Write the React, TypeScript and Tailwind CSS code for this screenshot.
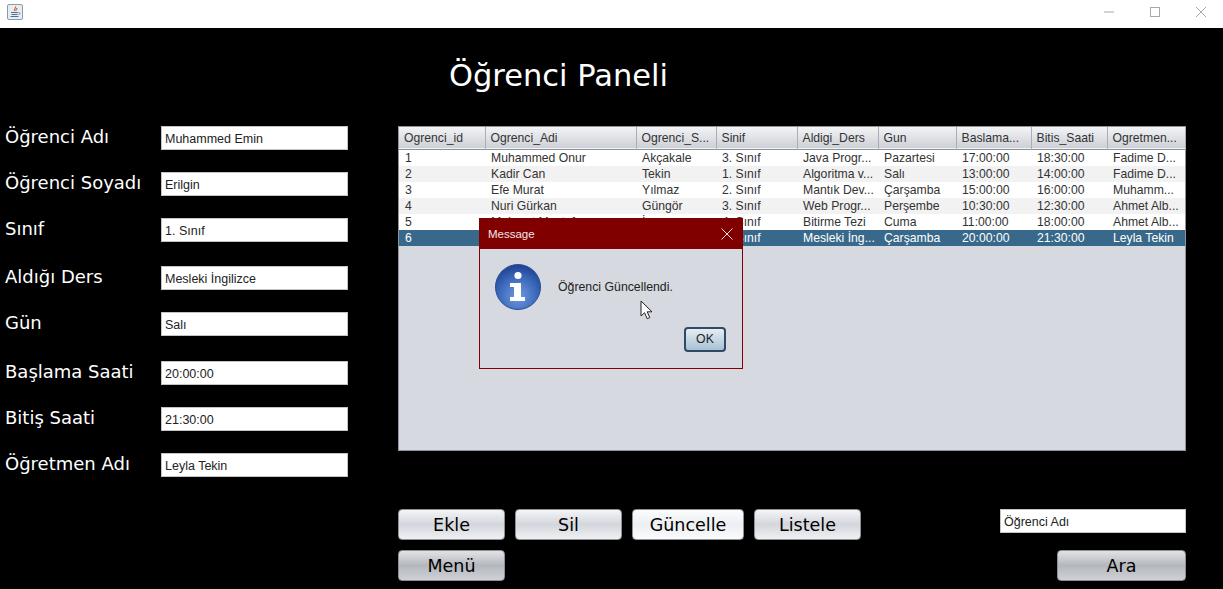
const formRows = [
  { label: "Öğrenci Adı", value: "Muhammed Emin", cls: "h-[46px]" },
  { label: "Öğrenci Soyadı", value: "Erilgin", cls: "h-[46px]" },
  { label: "Sınıf", value: "1. Sınıf", cls: "h-[48px]" },
  { label: "Aldığı Ders", value: "Mesleki İngilizce", cls: "h-[46px]" },
  { label: "Gün", value: "Salı", cls: "h-[49px]" },
  { label: "Başlama Saati", value: "20:00:00", cls: "h-[46px]" },
  { label: "Bitiş Saati", value: "21:30:00", cls: "h-[46px]" },
  { label: "Öğretmen Adı", value: "Leyla Tekin", cls: "h-[46px]" },
];

const columns = [
  { name: "Ogrenci_id", w: "w-[86px]" },
  { name: "Ogrenci_Adi", w: "w-[151px]" },
  { name: "Ogrenci_S...", w: "w-[80px]" },
  { name: "Sinif", w: "w-[81px]" },
  { name: "Aldigi_Ders", w: "w-[81px]" },
  { name: "Gun", w: "w-[78px]" },
  { name: "Baslama...", w: "w-[75px]" },
  { name: "Bitis_Saati", w: "w-[76px]" },
  { name: "Ogretmen...", w: "w-[78px]" },
];

const rows = [
  ["1", "Muhammed Onur", "Akçakale", "3. Sınıf", "Java Progr...", "Pazartesi", "17:00:00", "18:30:00", "Fadime D..."],
  ["2", "Kadir Can", "Tekin", "1. Sınıf", "Algoritma v...", "Salı", "13:00:00", "14:00:00", "Fadime D..."],
  ["3", "Efe Murat", "Yılmaz", "2. Sınıf", "Mantık Dev...", "Çarşamba", "15:00:00", "16:00:00", "Muhamm..."],
  ["4", "Nuri Gürkan", "Güngör", "3. Sınıf", "Web Progr...", "Perşembe", "10:30:00", "12:30:00", "Ahmet Alb..."],
  ["5", "Mehmet Mustafa", "İnan", "4. Sınıf", "Bitirme Tezi", "Cuma", "11:00:00", "18:00:00", "Ahmet Alb..."],
  ["6", "Muhammed Emin", "Erilgin", "1. Sınıf", "Mesleki İng...", "Çarşamba", "20:00:00", "21:30:00", "Leyla Tekin"],
];

function TextBox({ value, className }: { value: string; className: string }) {
  return (
    <div className={`h-[24px] bg-white border border-[#c4c4c4] px-[3px] text-[12.5px] leading-[24px] text-[#222] font-['Liberation_Sans',sans-serif] ${className}`}>
      {value}
    </div>
  );
}

function NimbusButton({ label, className }: { label: string; className: string }) {
  return (
    <button className={`rounded-[4px] border border-[#8c9099] pt-[2px] text-[17.5px] text-black font-['DejaVu_Sans',sans-serif] ${className}`}>
      {label}
    </button>
  );
}

const lightBtn = "h-[31px] bg-linear-to-b from-[#f4f5f7] via-[#d3d6dc] to-[#f0f1f3]";
const darkBtn = "h-[31px] bg-linear-to-b from-[#e2e3e6] via-[#b4b7bd] to-[#cfd1d5]";

function JavaIcon() {
  return (
    <svg width="16" height="16" viewBox="0 0 16 16">
      <rect x="0.5" y="0.5" width="15" height="15" rx="1.5" fill="#e8edf3" stroke="#8d9aa8" />
      <path d="M8.5 2.5C9.5 4 6.5 5 7.5 7M10 4C10 5 8.5 5.5 9 7" stroke="#d9622b" strokeWidth="1.1" fill="none" />
      <path d="M4 8.5h7M4.5 10.5h6M3.5 12.5h8" stroke="#4e6f94" strokeWidth="1" />
      <path d="M11.5 8.5c2 0 2 2 0 2" stroke="#4e6f94" strokeWidth="0.8" fill="none" />
    </svg>
  );
}

function InfoIcon() {
  return (
    <svg width="48" height="48" viewBox="0 0 48 48">
      <defs>
        <radialGradient id="infoFill" cx="50%" cy="70%" r="70%">
          <stop offset="0%" stopColor="#6f9be0" />
          <stop offset="60%" stopColor="#3c68bb" />
          <stop offset="100%" stopColor="#1d418f" />
        </radialGradient>
      </defs>
      <circle cx="24" cy="24" r="22.5" fill="url(#infoFill)" stroke="#2a4d94" />
      <circle cx="24" cy="12.5" r="3.6" fill="#fff" />
      <path d="M16 20h11v14h4v4H16v-4h4V24h-4z" fill="#fff" />
    </svg>
  );
}

function Cursor() {
  return (
    <svg width="14" height="20" viewBox="0 0 14 20" className="absolute left-[640px] top-[300px]">
      <path d="M1 1v15l3.6-3.3 2.6 6 2.6-1.1-2.6-5.8H12z" fill="#fff" stroke="#222" strokeWidth="1" />
    </svg>
  );
}

function WindowControls() {
  return (
    <div className="flex items-center gap-[34px] pr-[16px]">
      <svg width="12" height="12" viewBox="0 0 12 12"><path d="M1 6h10" stroke="#a8a8a8" /></svg>
      <svg width="12" height="12" viewBox="0 0 12 12"><rect x="1.5" y="1.5" width="9" height="9" fill="none" stroke="#a8a8a8" /></svg>
      <svg width="12" height="12" viewBox="0 0 12 12"><path d="M1 1l10 10M11 1L1 11" stroke="#a8a8a8" /></svg>
    </div>
  );
}

export default function App() {
  return (
    <div className="relative h-[589px] w-[1223px] overflow-hidden bg-black">
      <div className="flex h-[28px] items-center justify-between bg-white pl-[7px]">
        <div className="pb-[4px]"><JavaIcon /></div>
        <div className="pb-[4px]"><WindowControls /></div>
      </div>

      <div className="flex">
        <div className="w-[398px] pt-[98px] pl-[5px]">
          {formRows.map((r) => (
            <div key={r.label} className={`flex items-start ${r.cls}`}>
              <span className="mt-[1px] w-[156px] text-[18px] leading-[20px] text-white font-['DejaVu_Sans',sans-serif]">{r.label}</span>
              <TextBox value={r.value} className="w-[187px]" />
            </div>
          ))}
        </div>

        <div className="w-[788px]">
          <div className="h-[98px] pl-[51px] pt-[28px] text-[30.5px] leading-[40px] text-white font-['DejaVu_Sans',sans-serif]">
            Öğrenci Paneli
          </div>

          <div className="h-[325px] bg-[#d6d9df] border border-[#8f939c] font-['Liberation_Sans',sans-serif] text-[12.2px] text-[#333]">
            <table className="w-[786px] table-fixed border-collapse">
              <thead>
                <tr className="h-[22px] bg-linear-to-b from-[#f3f4f6] to-[#cdd0d6] border-b border-[#8c9099]">
                  {columns.map((c) => (
                    <th key={c.name} className={`${c.w} border-r border-[#a9adb5] pl-[5px] text-left font-normal whitespace-nowrap overflow-hidden`}>
                      {c.name}
                    </th>
                  ))}
                </tr>
              </thead>
              <tbody>
                {rows.map((row, i) => (
                  <tr key={row[0]} className={`h-[16px] leading-[16px] ${i === 5 ? "bg-[#39698a] text-white" : i % 2 === 0 ? "bg-white" : "bg-[#f2f2f2]"}`}>
                    {row.map((cell, j) => (
                      <td key={j} className="pl-[6px] p-0 whitespace-nowrap overflow-hidden">{cell}</td>
                    ))}
                  </tr>
                ))}
              </tbody>
            </table>
          </div>

          <div className="mt-[58px] flex justify-between">
            <div className="flex flex-col gap-[10px]">
              <div className="flex gap-[10px]">
                <NimbusButton label="Ekle" className={`w-[107px] ${lightBtn}`} />
                <NimbusButton label="Sil" className={`w-[107px] ${lightBtn}`} />
                <NimbusButton label="Güncelle" className="w-[112px] h-[31px] bg-linear-to-b from-[#fbfcfd] via-[#eceef1] to-[#fafbfc]" />
                <NimbusButton label="Listele" className={`w-[107px] ${lightBtn}`} />
              </div>
              <NimbusButton label="Menü" className={`w-[107px] ${darkBtn}`} />
            </div>
            <div className="flex flex-col items-end gap-[17px]">
              <TextBox value="Öğrenci Adı" className="w-[186px]" />
              <NimbusButton label="Ara" className={`w-[129px] ${darkBtn}`} />
            </div>
          </div>
        </div>
      </div>

      {/* message dialog */}
      <div className="absolute left-[479px] top-[218px] h-[151px] w-[264px] border border-[#800000] bg-[#d6d9df] font-['Liberation_Sans',sans-serif]">
        <div className="flex h-[30px] items-center justify-between bg-[#800000] pl-[8px] pr-[9px] text-[11.5px] text-[#f2e6e6]">
          <span className="pt-[1px]">Message</span>
          <svg width="12" height="12" viewBox="0 0 12 12"><path d="M0.5 0.5l11 11M11.5 0.5l-11 11" stroke="#f0e0e0" /></svg>
        </div>
        <div className="flex items-center pl-[14px] pt-[14px]">
          <InfoIcon />
          <span className="ml-[16px] text-[12.3px] text-[#222]">Öğrenci Güncellendi.</span>
        </div>
        <div className="flex justify-end pr-[16px] pt-[16px]">
          <button className="h-[25px] w-[42px] rounded-[4px] border-2 border-[#2f4a66] bg-linear-to-b from-[#e6edf3] to-[#a9c1d4] text-[12.3px] text-[#222]">
            OK
          </button>
        </div>
      </div>

      <Cursor />
    </div>
  );
}
